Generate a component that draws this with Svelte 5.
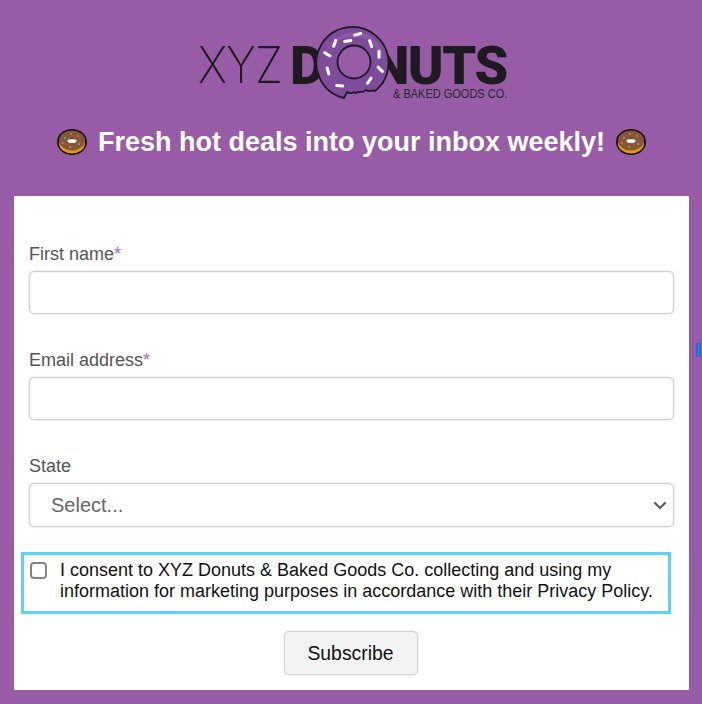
<script>
  const sprinkles = [
    [40.7, 10.3, -15], [30.7, 17, -8], [17.7, 19.3, -70], [10.3, 30.3, 30], [11, 47, 75],
    [22.7, 61.7, 5], [52.3, 56.7, -55], [63.3, 45.3, 45], [62, 30.3, 90], [53.7, 19.7, 70]
  ];
</script>

{#snippet donutEmoji()}
  <svg class="emoji" viewBox="0 0 32 32" aria-hidden="true">
    <ellipse cx="16" cy="16" rx="15" ry="13" fill="#111" />
    <ellipse cx="16" cy="17.5" rx="13" ry="10" fill="#e39a12" />
    <ellipse cx="16" cy="14.5" rx="13" ry="10" fill="#8a5632" />
    <ellipse cx="16" cy="14.5" rx="4.5" ry="2.6" fill="#fff" />
    <path d="M11.5 14.5a4.5 2.6 0 0 1 9 0a4.5 1.6 0 0 0-9 0z" fill="#4c2c14" />
    <circle cx="9" cy="12" r="1" fill="#4cc5d8" />
    <circle cx="23" cy="18" r="1" fill="#4cc5d8" />
    <circle cx="15" cy="8" r="1" fill="#d77" />
    <circle cx="7" cy="17" r=".9" fill="#d77" />
    <circle cx="22" cy="10" r=".9" fill="#d77" />
    <circle cx="14" cy="21" r=".9" fill="#4cc5d8" />
  </svg>
{/snippet}

<div class="page">
  <header>
    <div class="logo">
      <span class="xyz">XYZ</span>
      <div class="brand">
        <div class="word"><span>D</span><span class="o"></span><span>NUTS</span></div>
        <div class="sub">&amp; BAKED GOODS CO.</div>
      </div>
      <svg class="ring" viewBox="0 0 74 78" aria-hidden="true">
        <path d="M27 74 L30 68 C33 71 36 67 39 69 C43 66 46 70 49 66 C53 69 56 65 58 67 A36 36 0 1 0 27 74 Z" fill="#7f4c9c" stroke="#1d1a20" stroke-width="1.8" stroke-linejoin="round" />
        <path d="M8 30 C14 12 30 6 46 9 C58 12 66 24 66 36 C60 20 50 13 36 13 C22 13 13 20 8 30 Z" fill="#8d58a8" />
        <circle cx="37" cy="38" r="16.5" fill="#975ca5" stroke="#1d1a20" stroke-width="1.8" />
        {#each sprinkles as [x, y, r]}
          <rect x={x - 4.5} y={y - 1.5} width="9" height="3" rx="1.2" fill="#fff" transform="rotate({r} {x} {y})" />
        {/each}
      </svg>
    </div>
    <h1>{@render donutEmoji()}<span>Fresh hot deals into your inbox weekly!</span>{@render donutEmoji()}</h1>
  </header>

  <form class="card" onsubmit={(e) => e.preventDefault()}>
    <div class="field">
      <label for="fname">First name<span class="req">*</span></label>
      <input id="fname" type="text" />
    </div>
    <div class="field">
      <label for="email">Email address<span class="req">*</span></label>
      <input id="email" type="email" />
    </div>
    <div class="field">
      <label for="state">State</label>
      <div class="select-wrap">
        <select id="state">
          <option>Select...</option>
        </select>
        <svg class="chevron" viewBox="0 0 14 9" aria-hidden="true">
          <path d="M1.5 1.5 L7 7 L12.5 1.5" fill="none" stroke="#555" stroke-width="2.2" />
        </svg>
      </div>
    </div>
    <label class="consent">
      <input type="checkbox" />
      <span>I consent to XYZ Donuts &amp; Baked Goods Co. collecting and using my information for marketing purposes in accordance with their Privacy Policy.</span>
    </label>
    <button type="submit">Subscribe</button>
  </form>

  <div class="marker"></div>
</div>

<style>
  :global(body) {
    background: #975ca5;
  }
  .page {
    position: relative;
    width: 702px;
    height: 704px;
    padding: 25px 13px 14px 14px;
    box-sizing: border-box;
    background: #975ca5;
    font-family: "Liberation Sans", Arial, sans-serif;
    overflow: hidden;
  }
  header {
    height: 171px;
  }
  .logo {
    position: relative;
    display: flex;
    align-items: flex-start;
    gap: 11px;
    width: 310px;
    height: 75px;
    margin-left: 184px;
    color: #1d1a20;
  }
  .xyz {
    display: block;
    flex: none;
    width: 81px;
    margin-top: 12px;
    font-family: Inter, sans-serif;
    font-weight: 200;
    font-size: 51px;
    line-height: 56px;
    letter-spacing: -1px;
    transform: scaleX(0.89);
    transform-origin: left;
  }
  .word {
    display: flex;
    margin-top: 20px;
    height: 42px;
    font-family: Roboto, sans-serif;
    font-weight: 900;
    font-size: 54px;
    line-height: 42px;
    letter-spacing: -1.5px;
  }
  .word .o {
    width: 48px;
  }
  .sub {
    margin: 0 0 0 103px;
    font-size: 12.5px;
    line-height: 14px;
    color: #2a2530;
    white-space: nowrap;
    transform: scaleX(0.88);
    transform-origin: left;
  }
  .ring {
    position: absolute;
    left: 119px;
    top: -1px;
    width: 74px;
    height: 78px;
  }
  h1 {
    display: flex;
    align-items: center;
    justify-content: center;
    gap: 10px;
    margin: 24px 0 0;
    font-size: 27px;
    line-height: 36px;
    font-weight: 700;
    color: #fff;
  }
  .emoji {
    width: 32px;
    height: 32px;
  }
  .card {
    display: flex;
    flex-direction: column;
    width: 675px;
    height: 494px;
    padding: 47px 15px 0;
    box-sizing: border-box;
    background: #fff;
  }
  .field {
    margin-bottom: 35px;
  }
  .field label {
    display: block;
    margin-bottom: 6px;
    font-size: 18px;
    line-height: 22px;
    color: #555;
  }
  .req {
    color: #a66ab5;
  }
  input[type="text"],
  input[type="email"],
  select {
    display: block;
    width: 100%;
    height: 43px;
    box-sizing: border-box;
    border: 1px solid #cfcfcf;
    border-radius: 5px;
    background: #fff;
    box-shadow: 0 0 2px rgba(0, 0, 0, 0.18), inset 0 1px 2px rgba(0, 0, 0, 0.06);
  }
  .select-wrap {
    position: relative;
  }
  select {
    height: 44px;
    padding-left: 21px;
    appearance: none;
    font-family: inherit;
    font-size: 20px;
    color: #666;
  }
  .chevron {
    position: absolute;
    right: 7px;
    top: 18px;
    width: 14px;
    height: 9px;
  }
  .consent {
    display: flex;
    align-items: flex-start;
    gap: 13px;
    width: 650px;
    height: 62px;
    margin: -10px 0 17px -8px;
    padding: 5px 6px;
    box-sizing: border-box;
    border: 3px solid #5bd2fb;
    font-size: 18px;
    line-height: 21px;
    color: #111;
  }
  .consent input {
    flex: none;
    width: 17px;
    height: 17px;
    margin: 2px 0 0;
    appearance: none;
    border: 2px solid #858585;
    border-radius: 4px;
    background: #fff;
  }
  button {
    align-self: center;
    width: 134px;
    height: 44px;
    margin-left: -2px;
    border: 1px solid #d4d4d4;
    border-radius: 5px;
    background: #f3f3f3;
    box-shadow: 0 0 2px rgba(0, 0, 0, 0.18);
    font-family: inherit;
    font-size: 19.4px;
    color: #111;
  }
  .marker {
    position: absolute;
    right: 1px;
    top: 343px;
    width: 5px;
    height: 14px;
    background: repeating-linear-gradient(90deg, #1f6fe0 0 2px, #3c7fd8 2px 3px);
  }
</style>
